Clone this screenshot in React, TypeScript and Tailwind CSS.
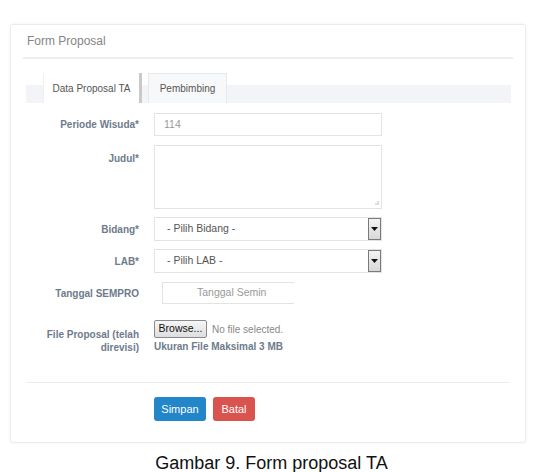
import { ReactNode } from "react";

const font = "font-['Liberation_Sans',Arial,sans-serif]";

function Label({ children, className = "" }: { children: ReactNode; className?: string }) {
  return (
    <div
      className={`w-[113px] shrink-0 text-right text-[10px] font-bold leading-[13px] text-[#6e7b8b] ${className}`}
    >
      {children}
    </div>
  );
}

function Select({ text }: { text: string }) {
  return (
    <div className="flex h-[24px] w-[228px] items-stretch border border-[#e3e3e3] bg-white">
      <div className="flex flex-1 items-center pl-[12px] text-[10.5px] text-[#555]">{text}</div>
      <div className="flex w-[13px] items-center justify-center border border-[#7a7a7a] bg-[linear-gradient(to_bottom,#f4f4f4,#d8d8d8)]">
        <svg width="7" height="4" viewBox="0 0 7 4">
          <path d="M0 0h7L3.5 4z" fill="#111" />
        </svg>
      </div>
    </div>
  );
}

export default function App() {
  return (
    <div className={`h-[472px] w-[543px] overflow-hidden bg-white ${font}`}>
      <div className="pt-[24px] pl-[10px]">
        <div className="h-[419px] w-[516px] rounded-[3px] border border-[#ececec] bg-white shadow-[0_0_3px_rgba(0,0,0,0.06)]">
          {/* Header */}
          <div className="mx-[12px] flex h-[34px] items-center border-b-2 border-[#eeeeee] pl-[4px] text-[12px] text-[#858585]">
            Form Proposal
          </div>

          <div className="px-[15px]">
            {/* Tabs */}
            <div className="mt-[14px] flex h-[30px] w-[485px] items-end bg-[linear-gradient(to_bottom,transparent_12px,#f3f4f7_12px)] pl-[17px]">
              <div className="flex h-[30px] w-[99px] items-center justify-center border-r-[3px] border-l border-r-[#c9c9c9] border-l-[#f0f0f0] bg-white text-[10px] text-[#555]">
                Data Proposal TA
              </div>
              <div className="ml-[6px] flex h-[30px] w-[79px] items-center justify-center border border-b-0 border-[#e8e9ec] bg-[#f7f8fa] text-[10px] text-[#555]">
                Pembimbing
              </div>
            </div>

            {/* Form */}
            <div className="mt-[10px] flex flex-col">
              <div className="flex items-center gap-[15px]">
                <Label>Periode Wisuda*</Label>
                <div className="flex h-[23px] w-[228px] items-center border border-[#e3e3e3] pl-[9px] text-[10.5px] text-[#999]">
                  114
                </div>
              </div>

              <div className="mt-[9px] flex items-start gap-[15px]">
                <Label className="mt-[7px]">Judul*</Label>
                <div className="relative h-[64px] w-[228px] border border-[#e3e3e3]">
                  <svg className="absolute right-[2px] bottom-[2px]" width="6" height="6" viewBox="0 0 6 6">
                    <path d="M5 1v4M3 3v2M1 5h0" stroke="#bbb" strokeWidth="1" />
                  </svg>
                </div>
              </div>

              <div className="mt-[8px] flex items-center gap-[15px]">
                <Label>Bidang*</Label>
                <Select text="- Pilih Bidang -" />
              </div>

              <div className="mt-[8px] flex items-center gap-[15px]">
                <Label>LAB*</Label>
                <Select text="- Pilih LAB -" />
              </div>

              <div className="mt-[9px] flex items-center gap-[15px]">
                <Label>Tanggal SEMPRO</Label>
                <div className="ml-[8px] flex h-[22px] w-[132px] items-center border border-r-0 border-[#e3e3e3] pl-[34px]">
                  <span className="text-[10.5px] whitespace-nowrap text-[#999]">Tanggal Semin</span>
                </div>
              </div>

              <div className="mt-[16px] flex items-start gap-[15px]">
                <Label className="mt-[8px]">
                  File Proposal (telah
                  <br />
                  direvisi)
                </Label>
                <div className="flex flex-col">
                  <div className="flex items-center gap-[5px] text-[10px]">
                    <div className="flex h-[18px] w-[53px] items-center justify-center rounded-[2px] border border-[#8a8a8a] bg-[linear-gradient(to_bottom,#f6f6f6,#dedede)] text-[10.5px] text-[#111]">
                      Browse...
                    </div>
                    <span className="text-[#888]">No file selected.</span>
                  </div>
                  <div className="mt-[2px] text-[10px] font-bold leading-[13px] text-[#6e7b8b]">
                    Ukuran File Maksimal 3 MB
                  </div>
                </div>
              </div>
            </div>

            {/* Footer */}
            <div className="mt-[28px] border-t border-[#ececec] pt-[14px] pl-[128px]">
              <div className="flex gap-[7px] text-[11px] text-white">
                <div className="flex h-[24px] w-[52px] items-center justify-center rounded-[3px] bg-[#2386c8]">
                  Simpan
                </div>
                <div className="flex h-[24px] w-[42px] items-center justify-center rounded-[3px] bg-[#d9534f]">
                  Batal
                </div>
              </div>
            </div>
          </div>
        </div>
      </div>

      <div className="mt-[12px] text-center text-[18px] leading-[16px] text-[#111]">
        Gambar 9. Form proposal TA
      </div>
    </div>
  );
}
